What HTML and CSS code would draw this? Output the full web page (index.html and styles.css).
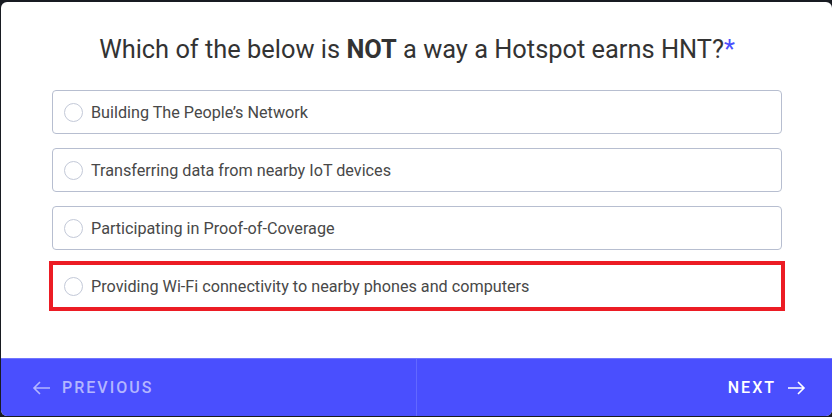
FILE: index.html
```html
<!DOCTYPE html>
<html lang="en">
<head>
    <meta charset="UTF-8">
    <meta name="viewport" content="width=device-width, initial-scale=1.0">
    <title>Hotspot Quiz</title>
    <link rel="stylesheet" href="styles.css">
</head>
<body>
    <div class="card">
        <div class="content">
            <h2 class="question">Which of the below is <strong>NOT</strong> a way a Hotspot earns HNT?<span class="required">*</span></h2>

            <label class="option">
                <span class="radio"></span>
                <span>Building The People’s Network</span>
            </label>
            <label class="option">
                <span class="radio"></span>
                <span>Transferring data from nearby IoT devices</span>
            </label>
            <label class="option">
                <span class="radio"></span>
                <span>Participating in Proof-of-Coverage</span>
            </label>
            <label class="option highlight">
                <span class="radio"></span>
                <span>Providing Wi-Fi connectivity to nearby phones and computers</span>
            </label>
        </div>

        <div class="footer">
            <button class="nav-btn prev">
                <svg width="19" height="14" viewBox="0 0 19 14" fill="none" stroke="currentColor" stroke-width="1.6"><path d="M18 7H2M8 1L2 7l6 6"/></svg>
                Previous
            </button>
            <button class="nav-btn next">
                Next
                <svg width="19" height="14" viewBox="0 0 19 14" fill="none" stroke="currentColor" stroke-width="1.6"><path d="M1 7h16M11 1l6 6-6 6"/></svg>
            </button>
        </div>
    </div>
</body>
</html>
```

FILE: styles.css
```css
* {
    margin: 0;
    padding: 0;
    box-sizing: border-box;
}

body {
    font-family: Roboto, 'Liberation Sans', sans-serif;
    background: #181b22;
    overflow: hidden;
}

.card {
    margin: 2px 0 0 1px;
    height: 414px;
    background: white;
    border-radius: 6px;
    overflow: hidden;
    display: flex;
    flex-direction: column;
}

.content {
    flex: 1;
    padding: 31px 50px 0 51px;
}

.question {
    font-size: 25.4px;
    font-weight: 400;
    line-height: 33px;
    color: #333;
    text-align: center;
    margin-bottom: 24px;
}

.question strong {
    font-weight: 700;
}

.required {
    color: #4a4ffe;
}

.option {
    display: flex;
    align-items: center;
    gap: 8px;
    height: 44px;
    padding: 0 11px;
    margin-bottom: 14px;
    border: 1px solid #b7bed0;
    border-radius: 4px;
    font-size: 16.2px;
    color: #484848;
    cursor: pointer;
}

.option.highlight {
    outline: 4px solid #ec1c24;
    outline-offset: -1px;
    border-radius: 0;
}

.radio {
    width: 19px;
    height: 19px;
    border: 1px solid #c3c9d8;
    border-radius: 50%;
    flex-shrink: 0;
}

.footer {
    height: 58px;
    background: #4a4ffe;
    border-top: 1px solid #6f74ff;
    display: grid;
    grid-template-columns: 416px 1fr;
}

.nav-btn {
    display: flex;
    align-items: center;
    gap: 11px;
    background: none;
    border: none;
    font-family: inherit;
    font-size: 16px;
    font-weight: 500;
    letter-spacing: 2px;
    text-transform: uppercase;
    cursor: pointer;
}

.prev {
    padding-left: 31px;
    color: #b3b6ff;
    border-right: 1px solid #6268ff;
}

.next {
    justify-content: flex-end;
    padding-right: 26px;
    color: white;
}
```
